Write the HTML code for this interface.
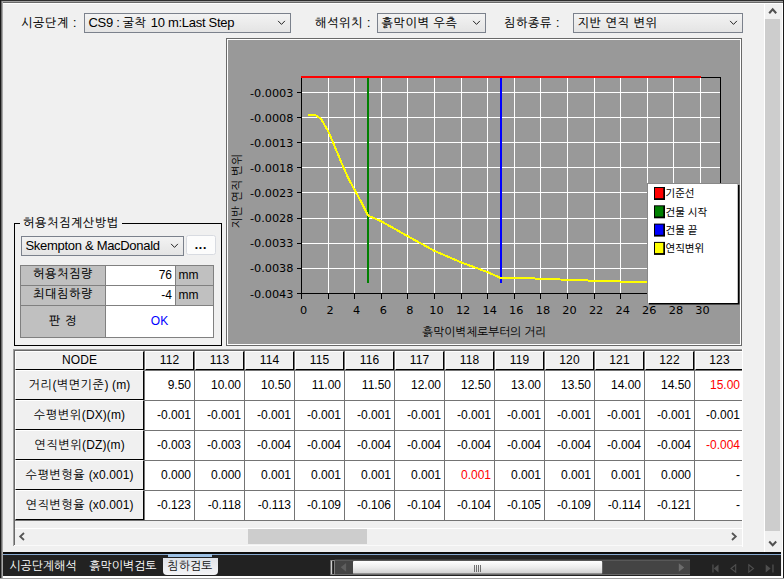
<!DOCTYPE html>
<html lang="ko"><head><meta charset="utf-8"><title>침하검토</title>
<style>
html,body{margin:0;padding:0;}
body{width:784px;height:579px;position:relative;overflow:hidden;background:#f0f0f0;
 font-family:"Liberation Sans","NanumGothic","Noto Sans CJK KR",sans-serif;font-size:12px;color:#000;}
.a{position:absolute;}
.t{position:absolute;white-space:nowrap;line-height:14px;height:14px;}
.gl{font-family:"Liberation Sans","NanumGothic","Noto Sans CJK KR",sans-serif;font-size:12px;-webkit-text-stroke:0.12px currentColor;}
.combo{position:absolute;box-sizing:border-box;border:1px solid #7b818c;height:20px;
 background:linear-gradient(#f3f3f3,#e4e4e4);}
.combo .t{top:1.5px;left:3.5px;}
.k{letter-spacing:0.7px;}
.l{letter-spacing:-0.3px;font-size:13px;-webkit-text-stroke:0;}
.ns{-webkit-text-stroke:0;}
.combo svg{position:absolute;right:4px;top:6.3px;}
.hc{letter-spacing:0.1px;position:absolute;box-sizing:border-box;background:#f0f0f0;border:1px solid #fff;border-right-color:#000;border-bottom-color:#000;text-align:center;white-space:nowrap;overflow:hidden;}
.dc{position:absolute;box-sizing:border-box;background:#fff;text-align:right;white-space:nowrap;color:#000;}
.red{color:#f00;}
.tab{position:absolute;color:#fff;font-family:"Liberation Sans","NanumGothic","Noto Sans CJK KR",sans-serif;font-size:11.9px;line-height:14px;white-space:nowrap;}
</style></head><body>

<span class="t gl k" style="left:21px;top:15.7px;">시공단계 :</span>
<div class="combo" style="left:84px;top:13px;width:207px;"><span class="t gl"><span class="l">CS9 : </span><span class="k">굴착 </span><span class="l">10 m:Last Step</span></span><svg width="9" height="6" viewBox="0 0 9 6"><path d="M1.1 0.9 L4.5 4.4 L7.9 0.9" fill="none" stroke="#222" stroke-width="1"/></svg></div>
<span class="t gl k" style="left:315px;top:15.7px;">해석위치 :</span>
<div class="combo" style="left:377px;top:13px;width:109px;"><span class="t gl"><span class="k">흙막이벽 우측</span></span><svg width="9" height="6" viewBox="0 0 9 6"><path d="M1.1 0.9 L4.5 4.4 L7.9 0.9" fill="none" stroke="#222" stroke-width="1"/></svg></div>
<span class="t gl k" style="left:504px;top:15.7px;">침하종류 :</span>
<div class="combo" style="left:573px;top:13px;width:170px;"><span class="t gl"><span class="k">지반 연직 변위</span></span><svg width="9" height="6" viewBox="0 0 9 6"><path d="M1.1 0.9 L4.5 4.4 L7.9 0.9" fill="none" stroke="#222" stroke-width="1"/></svg></div>
<div class="a" style="left:14px;top:223px;width:208px;height:123px;box-sizing:border-box;border:1px solid #000;"></div>
<span class="t gl k" style="left:20px;top:216px;background:#f0f0f0;padding:0 3px 0 3px;">허용처짐계산방법</span>
<div class="combo" style="left:21px;top:236px;width:163px;"><span class="t gl"><span class="l">Skempton &amp; MacDonald</span></span><svg width="9" height="6" viewBox="0 0 9 6"><path d="M1.1 0.9 L4.5 4.4 L7.9 0.9" fill="none" stroke="#222" stroke-width="1"/></svg></div>
<div class="a" style="left:186px;top:235.3px;width:29.5px;height:20px;box-sizing:border-box;border:1px solid #d8dbe1;background:#fcfcfc;border-radius:2.5px;"></div>
<span class="t gl" style="left:187px;top:237.5px;width:28px;text-align:center;letter-spacing:0.9px;font-weight:bold;">...</span>
<div class="a" style="left:20px;top:265px;width:194px;height:73px;background:#808080;"></div>
<div class="a" style="left:21px;top:266px;width:84px;height:19px;background:#c0c0c0;"></div>
<span class="t gl k" style="left:21px;top:267.0px;width:84px;text-align:center;color:#000;font-size:12px;">허용처짐량</span>
<div class="a" style="left:106px;top:266px;width:69px;height:19px;background:#fff;"></div>
<span class="t gl ns" style="left:106px;top:267.5px;width:66px;text-align:right;color:#000;font-size:12px;">76</span>
<div class="a" style="left:176px;top:266px;width:37px;height:19px;background:#c0c0c0;"></div>
<span class="t gl ns" style="left:178.5px;top:267.5px;color:#000;font-size:12px;">mm</span>
<div class="a" style="left:21px;top:286px;width:84px;height:19px;background:#c0c0c0;"></div>
<span class="t gl k" style="left:21px;top:287.0px;width:84px;text-align:center;color:#000;font-size:12px;">최대침하량</span>
<div class="a" style="left:106px;top:286px;width:69px;height:19px;background:#fff;"></div>
<span class="t gl ns" style="left:106px;top:287.5px;width:66px;text-align:right;color:#000;font-size:12px;">-4</span>
<div class="a" style="left:176px;top:286px;width:37px;height:19px;background:#c0c0c0;"></div>
<span class="t gl ns" style="left:178.5px;top:287.5px;color:#000;font-size:12px;">mm</span>
<div class="a" style="left:21px;top:306px;width:84px;height:31px;background:#c0c0c0;"></div>
<span class="t gl k" style="left:21px;top:313.5px;width:84px;text-align:center;color:#000;font-size:12px;">판 정</span>
<div class="a" style="left:106px;top:306px;width:107px;height:31px;background:#fff;"></div>
<span class="t gl ns" style="left:106px;top:313.5px;width:107px;text-align:center;color:#00f;font-size:12px;">OK</span>
<div class="a" style="left:226px;top:38px;width:516px;height:308px;box-sizing:border-box;border:1px solid #696969;background:#999;"></div>
<div class="a" style="left:227px;top:39px;width:514px;height:306px;box-sizing:border-box;border:1px solid #fff;"></div>
<svg class="a" style="left:0;top:0;" width="784" height="579" viewBox="0 0 784 579">
<g stroke="#fff" stroke-width="1" shape-rendering="crispEdges">
<line x1="302" y1="92.5" x2="720" y2="92.5"/>
<line x1="302" y1="117.5" x2="720" y2="117.5"/>
<line x1="302" y1="142.5" x2="720" y2="142.5"/>
<line x1="302" y1="167.5" x2="720" y2="167.5"/>
<line x1="302" y1="192.5" x2="720" y2="192.5"/>
<line x1="302" y1="218.5" x2="720" y2="218.5"/>
<line x1="302" y1="243.5" x2="720" y2="243.5"/>
<line x1="302" y1="268.5" x2="720" y2="268.5"/>
<line x1="328.5" y1="78" x2="328.5" y2="293"/>
<line x1="354.5" y1="78" x2="354.5" y2="293"/>
<line x1="381.5" y1="78" x2="381.5" y2="293"/>
<line x1="407.5" y1="78" x2="407.5" y2="293"/>
<line x1="434.5" y1="78" x2="434.5" y2="293"/>
<line x1="461.5" y1="78" x2="461.5" y2="293"/>
<line x1="487.5" y1="78" x2="487.5" y2="293"/>
<line x1="514.5" y1="78" x2="514.5" y2="293"/>
<line x1="540.5" y1="78" x2="540.5" y2="293"/>
<line x1="567.5" y1="78" x2="567.5" y2="293"/>
<line x1="594.5" y1="78" x2="594.5" y2="293"/>
<line x1="620.5" y1="78" x2="620.5" y2="293"/>
<line x1="647.5" y1="78" x2="647.5" y2="293"/>
<line x1="673.5" y1="78" x2="673.5" y2="293"/>
<line x1="700.5" y1="78" x2="700.5" y2="293"/>
</g>
<g stroke="#000" stroke-width="1" shape-rendering="crispEdges" fill="none">
<line x1="301.5" y1="76" x2="301.5" y2="299"/>
<line x1="297" y1="293.5" x2="721" y2="293.5"/>
<line x1="701" y1="77.5" x2="721" y2="77.5"/>
<line x1="720.5" y1="77" x2="720.5" y2="294"/>
<line x1="297" y1="92.5" x2="301" y2="92.5"/>
<line x1="297" y1="117.5" x2="301" y2="117.5"/>
<line x1="297" y1="142.5" x2="301" y2="142.5"/>
<line x1="297" y1="167.5" x2="301" y2="167.5"/>
<line x1="297" y1="192.5" x2="301" y2="192.5"/>
<line x1="297" y1="218.5" x2="301" y2="218.5"/>
<line x1="297" y1="243.5" x2="301" y2="243.5"/>
<line x1="297" y1="268.5" x2="301" y2="268.5"/>
<line x1="328.5" y1="293" x2="328.5" y2="299"/>
<line x1="354.5" y1="293" x2="354.5" y2="299"/>
<line x1="381.5" y1="293" x2="381.5" y2="299"/>
<line x1="407.5" y1="293" x2="407.5" y2="299"/>
<line x1="434.5" y1="293" x2="434.5" y2="299"/>
<line x1="461.5" y1="293" x2="461.5" y2="299"/>
<line x1="487.5" y1="293" x2="487.5" y2="299"/>
<line x1="514.5" y1="293" x2="514.5" y2="299"/>
<line x1="540.5" y1="293" x2="540.5" y2="299"/>
<line x1="567.5" y1="293" x2="567.5" y2="299"/>
<line x1="594.5" y1="293" x2="594.5" y2="299"/>
<line x1="620.5" y1="293" x2="620.5" y2="299"/>
<line x1="647.5" y1="293" x2="647.5" y2="299"/>
<line x1="673.5" y1="293" x2="673.5" y2="299"/>
<line x1="700.5" y1="293" x2="700.5" y2="299"/>
</g>
<line x1="301" y1="77" x2="701" y2="77" stroke="#f00" stroke-width="2" shape-rendering="crispEdges"/>
<line x1="368" y1="78" x2="368" y2="283" stroke="#008000" stroke-width="2" shape-rendering="crispEdges"/>
<line x1="501" y1="78" x2="501" y2="283" stroke="#00f" stroke-width="2" shape-rendering="crispEdges"/>
<polyline fill="none" stroke="#ff0" stroke-width="2" stroke-linejoin="round" shape-rendering="crispEdges" points="308,114.8 315.2,114.8 321.4,119.3 329.1,133 342.9,166.1 349.2,180 354.9,190.3 361.6,202.7 368,215.6 381.3,221.3 407.7,236.2 434.1,250.7 461.7,262.6 486.9,271.8 500.7,278 530,278.3 573,280 613.8,281.4 648.7,282"/>
<text x="293.5" y="96.5" text-anchor="end" font-family="DejaVu Sans, Liberation Sans, sans-serif" font-size="11.3" fill="#000">-0.0003</text>
<text x="293.5" y="121.6" text-anchor="end" font-family="DejaVu Sans, Liberation Sans, sans-serif" font-size="11.3" fill="#000">-0.0008</text>
<text x="293.5" y="146.8" text-anchor="end" font-family="DejaVu Sans, Liberation Sans, sans-serif" font-size="11.3" fill="#000">-0.0013</text>
<text x="293.5" y="171.9" text-anchor="end" font-family="DejaVu Sans, Liberation Sans, sans-serif" font-size="11.3" fill="#000">-0.0018</text>
<text x="293.5" y="197.0" text-anchor="end" font-family="DejaVu Sans, Liberation Sans, sans-serif" font-size="11.3" fill="#000">-0.0023</text>
<text x="293.5" y="222.1" text-anchor="end" font-family="DejaVu Sans, Liberation Sans, sans-serif" font-size="11.3" fill="#000">-0.0028</text>
<text x="293.5" y="247.2" text-anchor="end" font-family="DejaVu Sans, Liberation Sans, sans-serif" font-size="11.3" fill="#000">-0.0033</text>
<text x="293.5" y="272.4" text-anchor="end" font-family="DejaVu Sans, Liberation Sans, sans-serif" font-size="11.3" fill="#000">-0.0038</text>
<text x="293.5" y="297.5" text-anchor="end" font-family="DejaVu Sans, Liberation Sans, sans-serif" font-size="11.3" fill="#000">-0.0043</text>
<text x="303.5" y="313.8" text-anchor="middle" font-family="DejaVu Sans, Liberation Sans, sans-serif" font-size="11.3" fill="#000">0</text>
<text x="330.1" y="313.8" text-anchor="middle" font-family="DejaVu Sans, Liberation Sans, sans-serif" font-size="11.3" fill="#000">2</text>
<text x="356.7" y="313.8" text-anchor="middle" font-family="DejaVu Sans, Liberation Sans, sans-serif" font-size="11.3" fill="#000">4</text>
<text x="383.3" y="313.8" text-anchor="middle" font-family="DejaVu Sans, Liberation Sans, sans-serif" font-size="11.3" fill="#000">6</text>
<text x="409.9" y="313.8" text-anchor="middle" font-family="DejaVu Sans, Liberation Sans, sans-serif" font-size="11.3" fill="#000">8</text>
<text x="436.5" y="313.8" text-anchor="middle" font-family="DejaVu Sans, Liberation Sans, sans-serif" font-size="11.3" fill="#000">10</text>
<text x="463.1" y="313.8" text-anchor="middle" font-family="DejaVu Sans, Liberation Sans, sans-serif" font-size="11.3" fill="#000">12</text>
<text x="489.7" y="313.8" text-anchor="middle" font-family="DejaVu Sans, Liberation Sans, sans-serif" font-size="11.3" fill="#000">14</text>
<text x="516.3" y="313.8" text-anchor="middle" font-family="DejaVu Sans, Liberation Sans, sans-serif" font-size="11.3" fill="#000">16</text>
<text x="542.9" y="313.8" text-anchor="middle" font-family="DejaVu Sans, Liberation Sans, sans-serif" font-size="11.3" fill="#000">18</text>
<text x="569.5" y="313.8" text-anchor="middle" font-family="DejaVu Sans, Liberation Sans, sans-serif" font-size="11.3" fill="#000">20</text>
<text x="596.1" y="313.8" text-anchor="middle" font-family="DejaVu Sans, Liberation Sans, sans-serif" font-size="11.3" fill="#000">22</text>
<text x="622.7" y="313.8" text-anchor="middle" font-family="DejaVu Sans, Liberation Sans, sans-serif" font-size="11.3" fill="#000">24</text>
<text x="649.3" y="313.8" text-anchor="middle" font-family="DejaVu Sans, Liberation Sans, sans-serif" font-size="11.3" fill="#000">26</text>
<text x="675.9" y="313.8" text-anchor="middle" font-family="DejaVu Sans, Liberation Sans, sans-serif" font-size="11.3" fill="#000">28</text>
<text x="702.5" y="313.8" text-anchor="middle" font-family="DejaVu Sans, Liberation Sans, sans-serif" font-size="11.3" fill="#000">30</text>
<text x="484.3" y="336" text-anchor="middle" font-family="Liberation Sans, NanumGothic, Noto Sans CJK KR, sans-serif" font-size="11.7" fill="#000">흙막이벽체로부터의 거리</text>
<text transform="translate(241,191) rotate(-90)" text-anchor="middle" letter-spacing="0.3" font-family="Liberation Sans, NanumGothic, Noto Sans CJK KR, sans-serif" font-size="11.7" fill="#000">지반 연직 변위</text>
<rect x="649" y="185" width="90.5" height="119.5" fill="#000"/>
<rect x="647" y="183" width="91" height="120" fill="#888"/>
<rect x="648" y="184" width="89.5" height="119" fill="#fff"/>
<rect x="654" y="187.0" width="11" height="13" fill="#000"/>
<rect x="655" y="188.0" width="8.3" height="10.2" fill="#f00"/>
<text x="665.5" y="197.3" font-family="Liberation Sans, Noto Sans CJK KR, NanumGothic, sans-serif" font-size="10.5" fill="#000">기준선</text>
<rect x="654" y="205.3" width="11" height="13" fill="#000"/>
<rect x="655" y="206.3" width="8.3" height="10.2" fill="#008000"/>
<text x="665.5" y="215.6" font-family="Liberation Sans, Noto Sans CJK KR, NanumGothic, sans-serif" font-size="10.5" fill="#000">건물 시작</text>
<rect x="654" y="223.6" width="11" height="13" fill="#000"/>
<rect x="655" y="224.6" width="8.3" height="10.2" fill="#00f"/>
<text x="665.5" y="233.9" font-family="Liberation Sans, Noto Sans CJK KR, NanumGothic, sans-serif" font-size="10.5" fill="#000">건물 끝</text>
<rect x="654" y="241.9" width="11" height="13" fill="#000"/>
<rect x="655" y="242.9" width="8.3" height="10.2" fill="#ff0"/>
<text x="665.5" y="252.2" font-family="Liberation Sans, Noto Sans CJK KR, NanumGothic, sans-serif" font-size="10.5" fill="#000">연직변위</text>
</svg>
<div class="a" style="left:13px;top:349px;width:730px;height:197px;background:#f0f0f0;"></div>
<div class="a" style="left:13px;top:349px;width:730px;height:1px;background:#a0a0a0;"></div>
<div class="a" style="left:13px;top:350px;width:730px;height:1px;background:#696969;"></div>
<div class="a" style="left:13px;top:349px;width:1px;height:197px;background:#a0a0a0;"></div>
<div class="a" style="left:14px;top:350px;width:1px;height:196px;background:#696969;"></div>
<div class="a" style="left:742px;top:349px;width:1px;height:198px;background:#fff;"></div>
<div class="a" style="left:15px;top:351px;width:727px;height:170px;background:#747474;"></div>
<div class="hc " style="left:15px;top:351px;width:129px;height:19px;line-height:16px;">NODE</div>
<div class="hc " style="left:145px;top:351px;width:49px;height:19px;line-height:16px;"><span style="display:inline-block;width:47px;text-align:center;">112</span></div>
<div class="hc " style="left:195px;top:351px;width:49px;height:19px;line-height:16px;"><span style="display:inline-block;width:47px;text-align:center;">113</span></div>
<div class="hc " style="left:245px;top:351px;width:49px;height:19px;line-height:16px;"><span style="display:inline-block;width:47px;text-align:center;">114</span></div>
<div class="hc " style="left:295px;top:351px;width:49px;height:19px;line-height:16px;"><span style="display:inline-block;width:47px;text-align:center;">115</span></div>
<div class="hc " style="left:345px;top:351px;width:49px;height:19px;line-height:16px;"><span style="display:inline-block;width:47px;text-align:center;">116</span></div>
<div class="hc " style="left:395px;top:351px;width:49px;height:19px;line-height:16px;"><span style="display:inline-block;width:47px;text-align:center;">117</span></div>
<div class="hc " style="left:445px;top:351px;width:49px;height:19px;line-height:16px;"><span style="display:inline-block;width:47px;text-align:center;">118</span></div>
<div class="hc " style="left:495px;top:351px;width:49px;height:19px;line-height:16px;"><span style="display:inline-block;width:47px;text-align:center;">119</span></div>
<div class="hc " style="left:545px;top:351px;width:49px;height:19px;line-height:16px;"><span style="display:inline-block;width:47px;text-align:center;">120</span></div>
<div class="hc " style="left:595px;top:351px;width:49px;height:19px;line-height:16px;"><span style="display:inline-block;width:47px;text-align:center;">121</span></div>
<div class="hc " style="left:645px;top:351px;width:49px;height:19px;line-height:16px;"><span style="display:inline-block;width:47px;text-align:center;">122</span></div>
<div class="hc " style="left:695px;top:351px;width:47px;height:19px;line-height:16px;border-right:0;"><span style="display:inline-block;width:47px;text-align:center;">123</span></div>
<div class="hc " style="left:15px;top:370px;width:129px;height:30px;line-height:29px;"><span class="k">거리</span>(<span class="k">벽면기준</span>) (m)</div>
<div class="dc" style="left:145px;top:371px;width:49px;height:29px;line-height:28px;padding-right:3px;">9.50</div>
<div class="dc" style="left:195px;top:371px;width:49px;height:29px;line-height:28px;padding-right:3px;">10.00</div>
<div class="dc" style="left:245px;top:371px;width:49px;height:29px;line-height:28px;padding-right:3px;">10.50</div>
<div class="dc" style="left:295px;top:371px;width:49px;height:29px;line-height:28px;padding-right:3px;">11.00</div>
<div class="dc" style="left:345px;top:371px;width:49px;height:29px;line-height:28px;padding-right:3px;">11.50</div>
<div class="dc" style="left:395px;top:371px;width:49px;height:29px;line-height:28px;padding-right:3px;">12.00</div>
<div class="dc" style="left:445px;top:371px;width:49px;height:29px;line-height:28px;padding-right:3px;">12.50</div>
<div class="dc" style="left:495px;top:371px;width:49px;height:29px;line-height:28px;padding-right:3px;">13.00</div>
<div class="dc" style="left:545px;top:371px;width:49px;height:29px;line-height:28px;padding-right:3px;">13.50</div>
<div class="dc" style="left:595px;top:371px;width:49px;height:29px;line-height:28px;padding-right:3px;">14.00</div>
<div class="dc" style="left:645px;top:371px;width:49px;height:29px;line-height:28px;padding-right:3px;">14.50</div>
<div class="dc red" style="left:695px;top:371px;width:47px;height:29px;line-height:28px;padding-right:2px;">15.00</div>
<div class="hc " style="left:15px;top:400px;width:129px;height:30px;line-height:29px;"><span class="k">수평변위</span>(DX)(m)</div>
<div class="dc" style="left:145px;top:401px;width:49px;height:29px;line-height:28px;padding-right:3px;">-0.001</div>
<div class="dc" style="left:195px;top:401px;width:49px;height:29px;line-height:28px;padding-right:3px;">-0.001</div>
<div class="dc" style="left:245px;top:401px;width:49px;height:29px;line-height:28px;padding-right:3px;">-0.001</div>
<div class="dc" style="left:295px;top:401px;width:49px;height:29px;line-height:28px;padding-right:3px;">-0.001</div>
<div class="dc" style="left:345px;top:401px;width:49px;height:29px;line-height:28px;padding-right:3px;">-0.001</div>
<div class="dc" style="left:395px;top:401px;width:49px;height:29px;line-height:28px;padding-right:3px;">-0.001</div>
<div class="dc" style="left:445px;top:401px;width:49px;height:29px;line-height:28px;padding-right:3px;">-0.001</div>
<div class="dc" style="left:495px;top:401px;width:49px;height:29px;line-height:28px;padding-right:3px;">-0.001</div>
<div class="dc" style="left:545px;top:401px;width:49px;height:29px;line-height:28px;padding-right:3px;">-0.001</div>
<div class="dc" style="left:595px;top:401px;width:49px;height:29px;line-height:28px;padding-right:3px;">-0.001</div>
<div class="dc" style="left:645px;top:401px;width:49px;height:29px;line-height:28px;padding-right:3px;">-0.001</div>
<div class="dc" style="left:695px;top:401px;width:47px;height:29px;line-height:28px;padding-right:2px;">-0.001</div>
<div class="hc " style="left:15px;top:430px;width:129px;height:30px;line-height:29px;"><span class="k">연직변위</span>(DZ)(m)</div>
<div class="dc" style="left:145px;top:431px;width:49px;height:29px;line-height:28px;padding-right:3px;">-0.003</div>
<div class="dc" style="left:195px;top:431px;width:49px;height:29px;line-height:28px;padding-right:3px;">-0.003</div>
<div class="dc" style="left:245px;top:431px;width:49px;height:29px;line-height:28px;padding-right:3px;">-0.004</div>
<div class="dc" style="left:295px;top:431px;width:49px;height:29px;line-height:28px;padding-right:3px;">-0.004</div>
<div class="dc" style="left:345px;top:431px;width:49px;height:29px;line-height:28px;padding-right:3px;">-0.004</div>
<div class="dc" style="left:395px;top:431px;width:49px;height:29px;line-height:28px;padding-right:3px;">-0.004</div>
<div class="dc" style="left:445px;top:431px;width:49px;height:29px;line-height:28px;padding-right:3px;">-0.004</div>
<div class="dc" style="left:495px;top:431px;width:49px;height:29px;line-height:28px;padding-right:3px;">-0.004</div>
<div class="dc" style="left:545px;top:431px;width:49px;height:29px;line-height:28px;padding-right:3px;">-0.004</div>
<div class="dc" style="left:595px;top:431px;width:49px;height:29px;line-height:28px;padding-right:3px;">-0.004</div>
<div class="dc" style="left:645px;top:431px;width:49px;height:29px;line-height:28px;padding-right:3px;">-0.004</div>
<div class="dc red" style="left:695px;top:431px;width:47px;height:29px;line-height:28px;padding-right:2px;">-0.004</div>
<div class="hc " style="left:15px;top:460px;width:129px;height:30px;line-height:29px;"><span class="k">수평변형율</span> (x0.001)</div>
<div class="dc" style="left:145px;top:461px;width:49px;height:29px;line-height:28px;padding-right:3px;">0.000</div>
<div class="dc" style="left:195px;top:461px;width:49px;height:29px;line-height:28px;padding-right:3px;">0.000</div>
<div class="dc" style="left:245px;top:461px;width:49px;height:29px;line-height:28px;padding-right:3px;">0.001</div>
<div class="dc" style="left:295px;top:461px;width:49px;height:29px;line-height:28px;padding-right:3px;">0.001</div>
<div class="dc" style="left:345px;top:461px;width:49px;height:29px;line-height:28px;padding-right:3px;">0.001</div>
<div class="dc" style="left:395px;top:461px;width:49px;height:29px;line-height:28px;padding-right:3px;">0.001</div>
<div class="dc red" style="left:445px;top:461px;width:49px;height:29px;line-height:28px;padding-right:3px;">0.001</div>
<div class="dc" style="left:495px;top:461px;width:49px;height:29px;line-height:28px;padding-right:3px;">0.001</div>
<div class="dc" style="left:545px;top:461px;width:49px;height:29px;line-height:28px;padding-right:3px;">0.001</div>
<div class="dc" style="left:595px;top:461px;width:49px;height:29px;line-height:28px;padding-right:3px;">0.001</div>
<div class="dc" style="left:645px;top:461px;width:49px;height:29px;line-height:28px;padding-right:3px;">0.000</div>
<div class="dc" style="left:695px;top:461px;width:47px;height:29px;line-height:28px;padding-right:2px;">-</div>
<div class="hc " style="left:15px;top:490px;width:129px;height:30px;line-height:29px;"><span class="k">연직변형율</span> (x0.001)</div>
<div class="dc" style="left:145px;top:491px;width:49px;height:29px;line-height:28px;padding-right:3px;">-0.123</div>
<div class="dc" style="left:195px;top:491px;width:49px;height:29px;line-height:28px;padding-right:3px;">-0.118</div>
<div class="dc" style="left:245px;top:491px;width:49px;height:29px;line-height:28px;padding-right:3px;">-0.113</div>
<div class="dc" style="left:295px;top:491px;width:49px;height:29px;line-height:28px;padding-right:3px;">-0.109</div>
<div class="dc" style="left:345px;top:491px;width:49px;height:29px;line-height:28px;padding-right:3px;">-0.106</div>
<div class="dc" style="left:395px;top:491px;width:49px;height:29px;line-height:28px;padding-right:3px;">-0.104</div>
<div class="dc" style="left:445px;top:491px;width:49px;height:29px;line-height:28px;padding-right:3px;">-0.104</div>
<div class="dc" style="left:495px;top:491px;width:49px;height:29px;line-height:28px;padding-right:3px;">-0.105</div>
<div class="dc" style="left:545px;top:491px;width:49px;height:29px;line-height:28px;padding-right:3px;">-0.109</div>
<div class="dc" style="left:595px;top:491px;width:49px;height:29px;line-height:28px;padding-right:3px;">-0.114</div>
<div class="dc" style="left:645px;top:491px;width:49px;height:29px;line-height:28px;padding-right:3px;">-0.121</div>
<div class="dc" style="left:695px;top:491px;width:47px;height:29px;line-height:28px;padding-right:2px;">-</div>
<div class="a" style="left:15px;top:528px;width:727px;height:1px;background:#fff;"></div>
<svg class="a" style="left:14px;top:529px;" width="728" height="17" viewBox="0 0 728 17"><rect x="234" y="0" width="119" height="15" fill="#cdcdcd"/><path d="M10 4 L6.2 7.5 L10 11" fill="none" stroke="#555" stroke-width="1.8"/><path d="M718 4 L721.8 7.5 L718 11" fill="none" stroke="#555" stroke-width="1.8"/></svg>
<div class="a" style="left:14px;top:545px;width:728px;height:1px;background:#fafafa;"></div>
<div class="a" style="left:764px;top:3px;width:1px;height:549px;background:#fff;"></div>
<div class="a" style="left:765px;top:19px;width:15px;height:512px;background:#cdcdcd;"></div>
<svg class="a" style="left:765px;top:3px;" width="15" height="16" viewBox="0 0 15 16"><path d="M4.2 10.2 L7.7 6.4 L11.2 10.2" fill="none" stroke="#505050" stroke-width="2.1"/></svg>
<svg class="a" style="left:765px;top:535px;" width="15" height="16" viewBox="0 0 15 16"><path d="M4.2 6.5 L7.7 10.2 L11.2 6.5" fill="none" stroke="#505050" stroke-width="2"/></svg>
<div class="a" style="left:3px;top:552px;width:778px;height:24px;background:#222;"></div>
<div class="a" style="left:3px;top:552px;width:778px;height:2px;background:#0c0c0c;"></div>
<div class="a" style="left:3px;top:554px;width:778px;height:1px;background:#86a8cf;"></div>
<div class="a" style="left:168px;top:554px;width:44px;height:3px;background:#9cc0e4;"></div>
<div class="a" style="left:163px;top:558px;width:55px;height:17px;background:linear-gradient(#dfe2e8,#f4f4f6);border-radius:0 0 4px 4px;"></div>
<span class="tab" style="left:9.3px;top:559px;">시공단계해석</span>
<span class="tab" style="left:89.3px;top:559px;">흙막이벽검토</span>
<span class="tab" style="left:167.5px;top:559px;color:#111;">침하검토</span>
<svg class="a" style="left:328px;top:558px;" width="456" height="18" viewBox="0 0 456 18"><defs><linearGradient id="th" x1="0" y1="0" x2="0" y2="1"><stop offset="0" stop-color="#fff"/><stop offset="0.5" stop-color="#ececec"/><stop offset="1" stop-color="#cfcfcf"/></linearGradient></defs><rect x="6.6" y="2" width="355.4" height="15" fill="#444"/><rect x="6.6" y="1.6" width="355.4" height="1.2" fill="#5e5e5e"/><rect x="6.6" y="16" width="355.4" height="1" fill="#6a6a6a"/><rect x="2.8" y="2.5" width="3.6" height="14" fill="#111" stroke="#8a8a8a" stroke-width="1"/><rect x="3.2" y="3" width="1" height="13" fill="#f4f4f4"/><rect x="25" y="3" width="249.2" height="12.8" rx="1" fill="url(#th)"/><rect x="25" y="15.2" width="249.2" height="0.8" fill="#8a8a8a"/><path d="M18.1 5 L12.7 9.3 L18.1 13.7 Z" fill="#5e5e5e"/><path d="M350.8 5.2 L356.2 9.4 L350.8 13.7 Z" fill="#6c6c6c"/><g stroke="#707070" stroke-width="1" shape-rendering="crispEdges"><line x1="146.5" y1="6.5" x2="146.5" y2="14"/><line x1="148.5" y1="6.5" x2="148.5" y2="14"/><line x1="150.5" y1="6.5" x2="150.5" y2="14"/><line x1="152.5" y1="6.5" x2="152.5" y2="14"/></g><g fill="#4e4e4e" stroke="none"><rect x="384.3" y="6.5" width="1.3" height="8"/><path d="M390.5 6.5 L385.8 10.5 L390.5 14.5 Z"/><path d="M437.7 6.5 L442.6 10.5 L437.7 14.5 Z"/><rect x="444.3" y="6.5" width="1.3" height="8"/></g><g fill="none" stroke="#4e4e4e" stroke-width="1.1"><path d="M407.7 6.8 L403 10.5 L407.7 14.2 Z"/><path d="M420.8 6.8 L425.5 10.5 L420.8 14.2 Z"/></g></svg>
<div class="a" style="left:0;top:0;width:784px;height:1px;background:#2e2e2e;"></div>
<div class="a" style="left:0;top:1px;width:784px;height:1px;background:#a0a0a0;"></div>
<div class="a" style="left:0;top:2px;width:784px;height:1px;background:#696969;"></div>
<div class="a" style="left:3px;top:3px;width:780px;height:1px;background:#fff;"></div>
<div class="a" style="left:0;top:0;width:1px;height:579px;background:#1a1a1a;"></div>
<div class="a" style="left:1px;top:1px;width:1px;height:578px;background:#6e6e6e;"></div>
<div class="a" style="left:2px;top:2px;width:1px;height:577px;background:#a8a8a8;"></div>
<div class="a" style="left:782px;top:3px;width:1px;height:575px;background:#fff;"></div>
<div class="a" style="left:783px;top:0;width:1px;height:579px;background:#1a1a1a;"></div>
<div class="a" style="left:3px;top:576px;width:780px;height:2px;background:#fff;"></div>
<div class="a" style="left:0px;top:578px;width:784px;height:1px;background:#a0a0a0;"></div>
</body></html>
